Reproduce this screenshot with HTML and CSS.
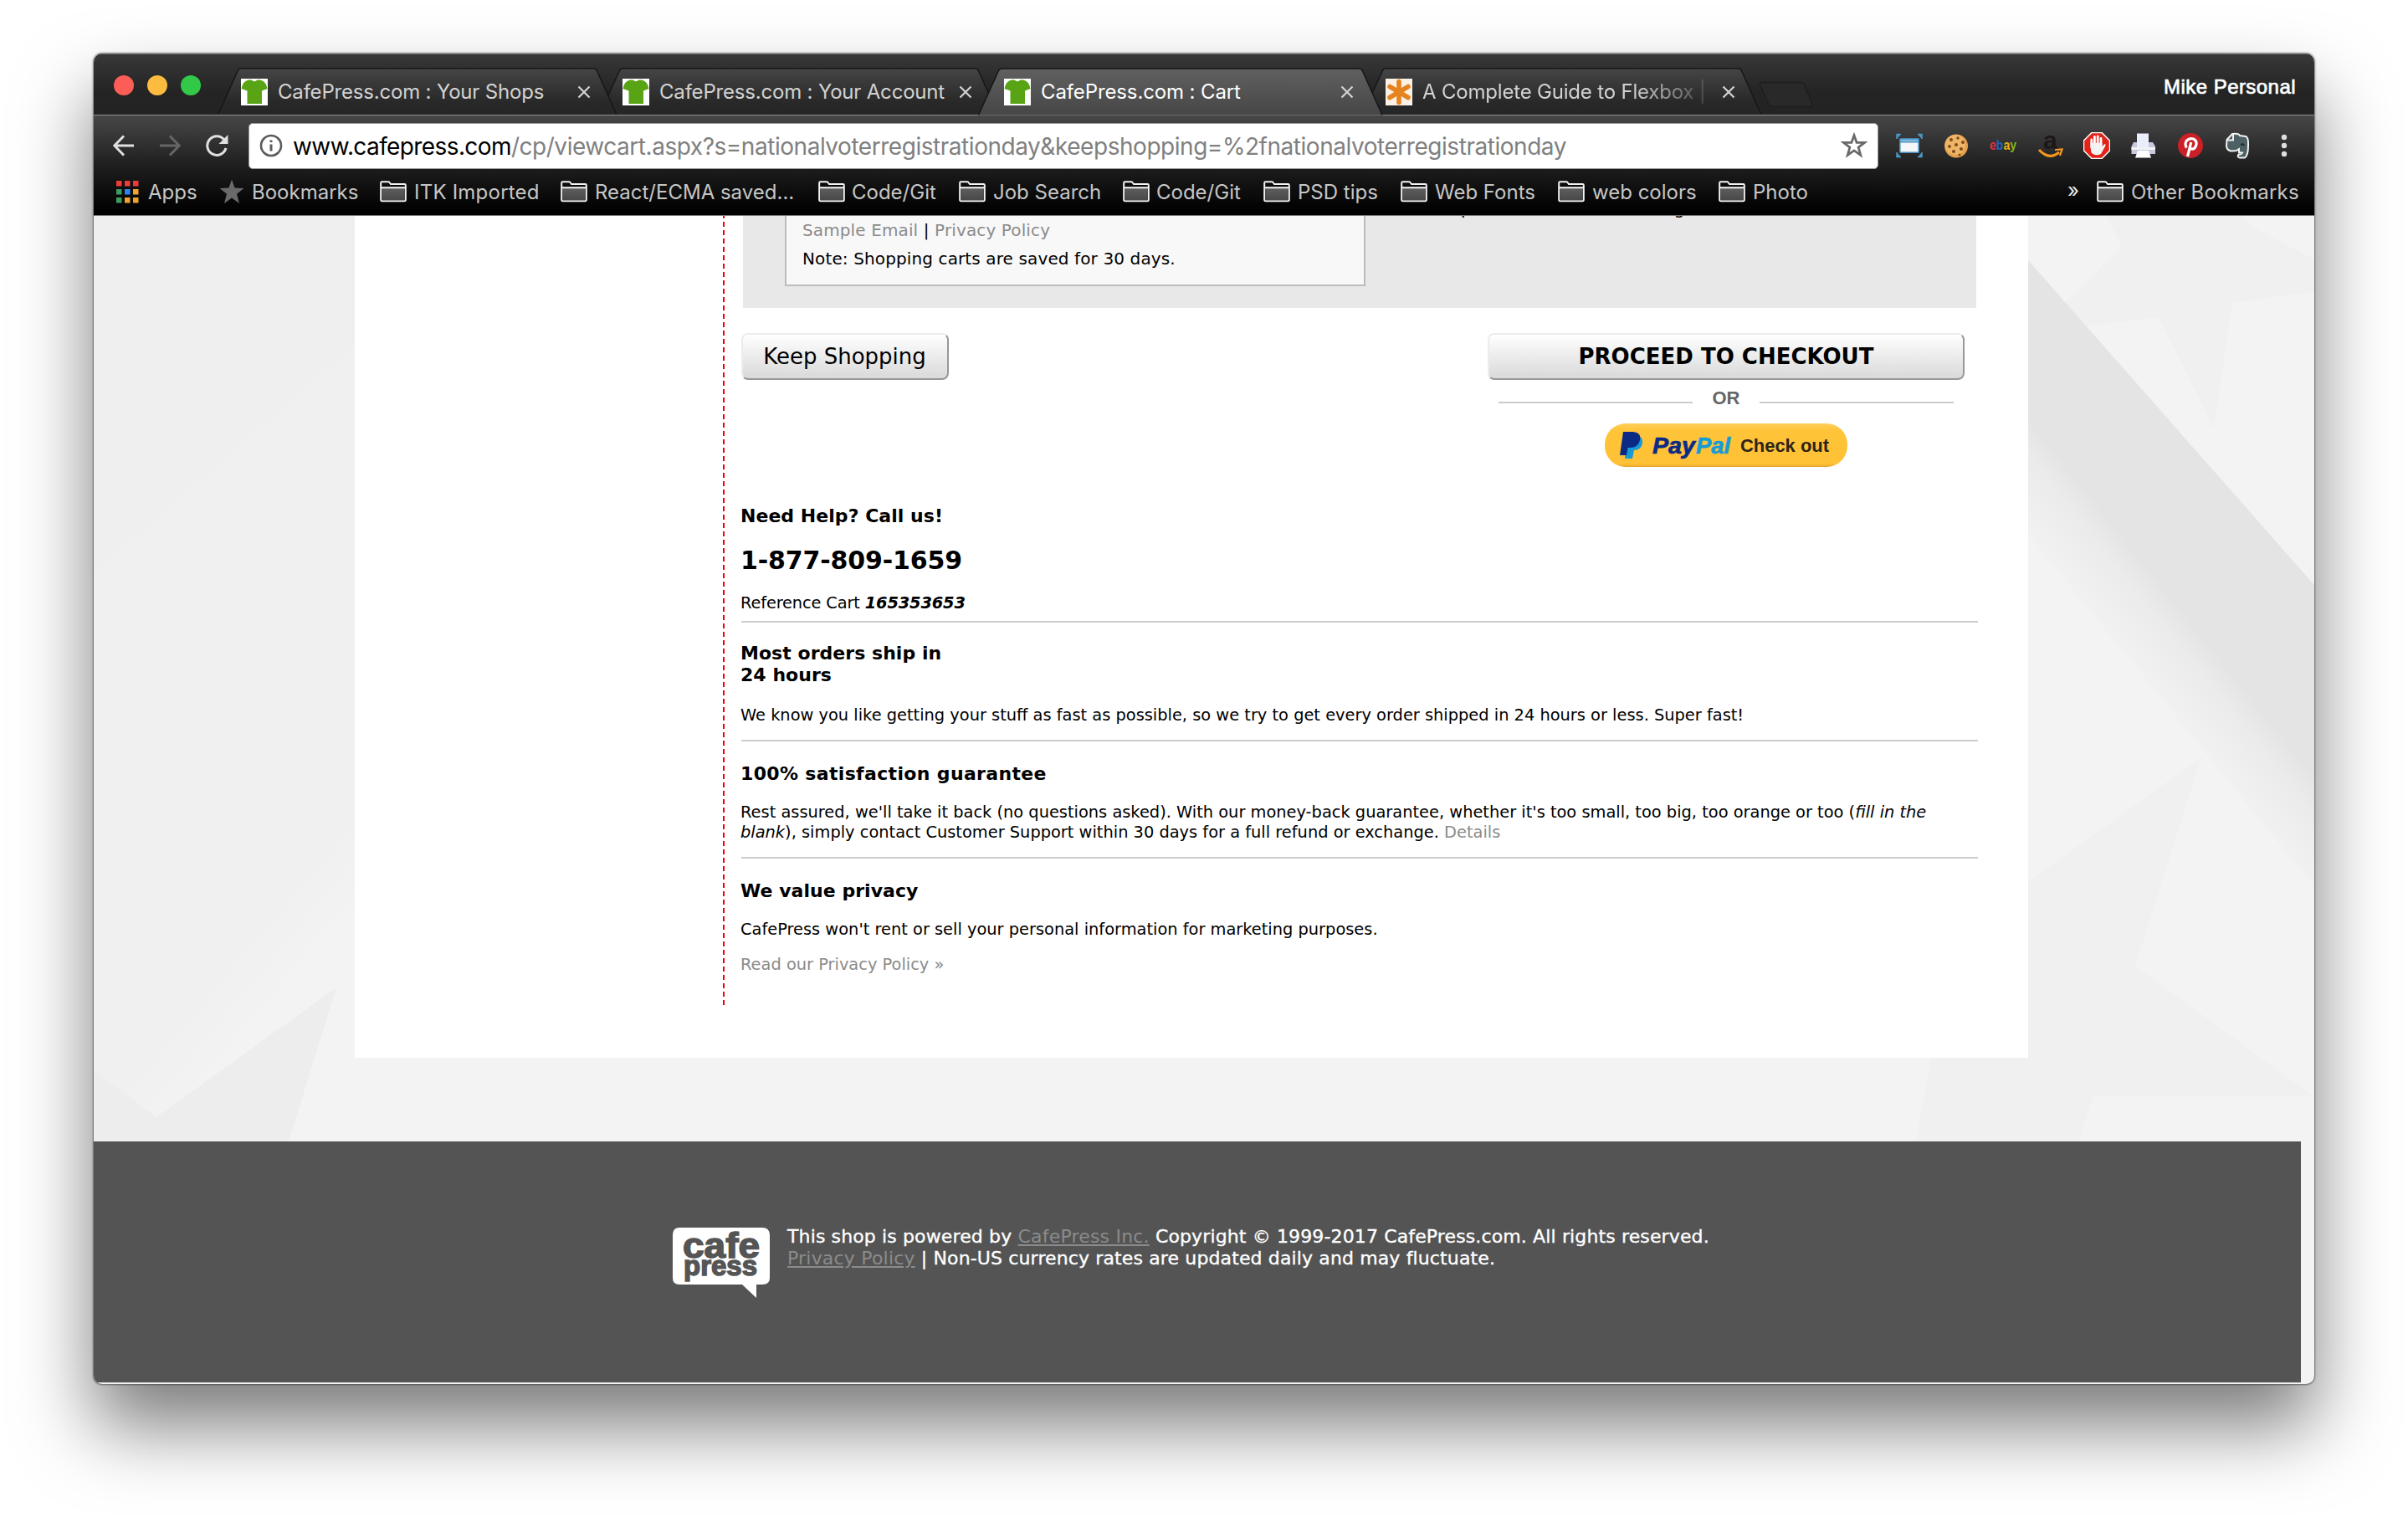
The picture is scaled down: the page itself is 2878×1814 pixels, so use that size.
FILE: index.html
```html
<!DOCTYPE html>
<html lang="en">
<head>
<meta charset="utf-8">
<title>CafePress.com : Cart</title>
<link rel="stylesheet" href="styles.css">
</head>
<body>
<svg class="defs" width="0" height="0" aria-hidden="true">
  <defs>
    <linearGradient id="tabFill" x1="0" y1="0" x2="0" y2="1"><stop offset="0" stop-color="#454545"/><stop offset=".75" stop-color="#282828"/><stop offset="1" stop-color="#262626"/></linearGradient>
    <linearGradient id="tabActive" x1="0" y1="0" x2="0" y2="1"><stop offset="0" stop-color="#606060"/><stop offset="1" stop-color="#464646"/></linearGradient>
    <linearGradient id="folderFill" x1="0" y1="0" x2="0" y2="1"><stop offset="0" stop-color="#5e5e5e"/><stop offset="1" stop-color="#484848"/></linearGradient>
    <symbol id="tab" viewBox="0 0 484 74"><path d="M0.5 73.5 L24.5 20.5 Q25.5 18 28.5 18 H455 Q458.500 18 459.500 21 L483 73.500" stroke="#161616" stroke-width="1.500"/></symbol>
    <symbol id="shirt" viewBox="0 0 32 32"><rect width="32" height="32" fill="#fff"/><path d="M9 1.500 L12.500 1.500 Q16 5 19.500 1.500 L23 1.500 Q30 3 31.500 12 L25 14.500 V30 H7.500 V14.500 L.5 12 Q2 3 9 1.500Z" fill="#59a414"/></symbol>
    <symbol id="folder" viewBox="0 0 32 26"><path d="M1.200 22.500 V2.500 Q1.200 1.200 2.500 1.200 H10 Q11 1.200 11.500 2 L13 4 H29.500 Q30.800 4 30.800 5.200 V22.500 Q30.800 24.300 29.500 24.300 H2.500 Q1.200 24.300 1.200 22.500Z" fill="#0c0c0c" stroke="#f4f4f4" stroke-width="2"/><path d="M2.200 9 H29.800 V23.300 H2.200Z" fill="url(#folderFill)"/><path d="M1.200 8.200 H30.800" stroke="#f4f4f4" stroke-width="2"/></symbol>
    <symbol id="close" viewBox="0 0 16 16"><path d="M1.500 1.500 L14.500 14.500 M14.500 1.500 L1.500 14.500" stroke="#d4d4d4" stroke-width="2.200"/></symbol>
  </defs>
</svg>

<div class="window">
  <header class="chrome">
    <div class="tabstrip">
      <div class="lights"><i class="red"></i><i class="amber"></i><i class="green"></i></div>
      <div class="tab first"><svg class="shape" fill="url(#tabFill)"><use href="#tab"/></svg><svg class="fav"><use href="#shirt"/></svg><span class="title">CafePress.com : Your Shops</span><svg class="x"><use href="#close"/></svg></div>
      <div class="tab"><svg class="shape" fill="url(#tabFill)"><use href="#tab"/></svg><svg class="fav"><use href="#shirt"/></svg><span class="title">CafePress.com : Your Account</span><svg class="x"><use href="#close"/></svg></div>
      <div class="tab active"><svg class="shape" fill="url(#tabActive)"><use href="#tab"/></svg><svg class="fav"><use href="#shirt"/></svg><span class="title">CafePress.com : Cart</span><svg class="x"><use href="#close"/></svg></div>
      <div class="tab"><svg class="shape" fill="url(#tabFill)"><use href="#tab"/></svg>
        <svg class="fav" viewBox="0 0 32 32"><rect width="32" height="32" fill="#fdf1e5"/><path d="M16 3.500 V28.500 M5 9.500 L27 22.500 M27 9.500 L5 22.500" stroke="#e5841f" stroke-width="5.600" stroke-linecap="round"/></svg>
        <span class="title fade">A Complete Guide to Flexbox |</span><svg class="x"><use href="#close"/></svg></div>
      <svg class="newtab" viewBox="0 0 66 32"><path d="M2 1.500 H50 Q53 1.500 54.500 4 L64 28 Q64.500 30.500 62 30.500 H17 Q13.500 30.500 12 28 L1.500 4 Q1 1.500 3 1.500Z" fill="#292929" stroke="#1d1d1d" stroke-width="1.300"/></svg>
      <div class="profile">Mike Personal</div>
    </div>

    <div class="toolbar">
      <svg class="nav" viewBox="0 0 26 26"><path d="M25 13 H2.500 M13 1.500 L1.800 13 L13 24.500" fill="none" stroke="#e0e0e0" stroke-width="3"/></svg>
      <svg class="nav fwd" viewBox="0 0 26 26"><path d="M1 13 H23.500 M13 1.500 L24.200 13 L13 24.500" fill="none" stroke="#666" stroke-width="3"/></svg>
      <svg class="nav reload" viewBox="0 0 28 28"><path d="M22.500 6.500 A11.300 11.300 0 1 0 25 17" fill="none" stroke="#e0e0e0" stroke-width="3"/><path d="M27.500 1 V12 H16.500Z" fill="#e0e0e0"/></svg>
      <div class="omnibox">
        <svg class="info" viewBox="0 0 28 28"><circle cx="14" cy="14" r="12" fill="none" stroke="#5c5c5c" stroke-width="2.600"/><path d="M14 12.500 V20.500 M14 7.500 V10" stroke="#5c5c5c" stroke-width="3"/></svg>
        <div class="url"><b>www.cafepress.com</b>/cp/viewcart.aspx?s=nationalvoterregistrationday&amp;keepshopping=%2fnationalvoterregistrationday</div>
        <svg class="star" viewBox="0 0 30 30"><path d="M15 3.500 L17.900 11.500 L26.800 11.600 L19.800 17 L22.300 25.600 L15 20.600 L7.700 25.600 L10.200 17 L3.200 11.600 L12.100 11.500Z" fill="none" stroke="#6a6a6a" stroke-width="2.600"/></svg>
      </div>
      <div class="extensions">
        <svg viewBox="0 0 32 32"><path d="M1 8 V2.500 H6 M26 2.500 H31 V8 M1 24 V29.500 H6 M26 29.500 H31 V24" fill="#4a95c4" stroke="#4a95c4" stroke-width="1.500"/><rect x="4" y="7" width="24" height="18" rx="1.500" fill="#3f86b5"/><rect x="5.500" y="8.500" width="21" height="3" fill="#7db9dd"/><rect x="5.500" y="12.500" width="21" height="11" fill="#f4f6f8"/></svg>
        <svg viewBox="0 0 32 32"><circle cx="16" cy="16.500" r="14" fill="#e3a14c"/><circle cx="15" cy="15" r="12" fill="#efb566"/><g fill="#7b4a1d"><circle cx="10" cy="9" r="2"/><circle cx="18" cy="7" r="1.700"/><circle cx="24" cy="12" r="2"/><circle cx="8" cy="17" r="1.900"/><circle cx="16" cy="15" r="2"/><circle cx="22" cy="20" r="2"/><circle cx="13" cy="23" r="2"/><circle cx="20" cy="27" r="1.500"/></g></svg>
        <svg viewBox="0 0 32 32"><text x="0" y="21" class="ebay" textLength="32" lengthAdjust="spacingAndGlyphs"><tspan fill="#e2323a">e</tspan><tspan fill="#1c66c8">b</tspan><tspan fill="#f0ae14">a</tspan><tspan fill="#86b817">y</tspan></text></svg>
        <svg viewBox="0 0 32 32"><text x="8" y="20" class="amz">a</text><path d="M3 21 Q15 34 27 24" fill="none" stroke="#f7981d" stroke-width="3"/><path d="M22 21 L30.500 20.500 L28 28" fill="none" stroke="#f7981d" stroke-width="2.200"/></svg>
        <svg viewBox="0 0 32 32"><path d="M10 .5 H22 L31.500 10 V22 L22 31.500 H10 L.5 22 V10Z" fill="#e2231a" stroke="#fff" stroke-width="1.500"/><path d="M9.800 18 V9 M13.400 15 V5.500 M17.200 15 V5 M21 16 V7.500" stroke="#fff" stroke-width="2.800" stroke-linecap="round"/><path d="M8.500 13 H22.500 V17 L25.500 14 Q27.500 14.500 26 17 L21 26 Q15 29 10 25 Q8.500 22 8.500 13Z" fill="#f3f3f3"/></svg>
        <svg viewBox="0 0 32 32"><path d="M8 18 V1.500 H22 V18Z" fill="#e8eefa"/><path d="M4 12 H8 V18 H22 V12 H27 L30 17 V26 H1.500 V17Z" fill="#c7c9dd"/><path d="M1.500 18 H30 V21 H1.500Z" fill="#f2f2f8"/><path d="M9 22 H22 L25 30.500 H6Z" fill="#fff"/></svg>
        <svg viewBox="0 0 32 32"><circle cx="16" cy="16" r="15" fill="#cb2027"/><path d="M11.500 18.500 Q8.500 14 11.500 10 Q15 6.500 19.500 8 Q24.500 10.500 22.500 16.500 Q20 21.500 16 19.500 M16.800 12 L12.500 29" fill="none" stroke="#fff" stroke-width="3.200"/></svg>
        <svg viewBox="0 0 32 32"><path d="M10 2 L3.500 9 L3 17 Q4 22 9 22.500 L15 22 L18 20 V24 L22 24.500 Q20.500 27 17.500 26.500 Q15.500 30 19 30.500 H25 Q29 28 29 16 Q29.500 6 26 5 L19 4 Q18 1 10 2Z" fill="#4d6063" stroke="#f2f2f2" stroke-width="2"/><path d="M11 2 V9.500 H4" fill="none" stroke="#f2f2f2" stroke-width="2"/><path d="M20.500 15.500 Q22.500 12.500 24 16" fill="none" stroke="#222" stroke-width="2"/></svg>
        <svg class="dots" viewBox="0 0 8 32"><circle cx="4" cy="6" r="3.200"/><circle cx="4" cy="16" r="3.200"/><circle cx="4" cy="26" r="3.200"/></svg>
      </div>
    </div>

    <nav class="bookmarks">
      <svg class="apps" viewBox="0 0 27 27"><path d="M0 0h6.500v6.500H0z M10 0h6.500v6.500H10z M20 0h6.500v6.500H20z" fill="#ef3c39"/><path d="M0 10h6.500v6.500H0z M0 20h6.500v6.500H0z" fill="#3c9b5f"/><path d="M10 10h6.500v6.500H10z" fill="#2d86ee"/><path d="M20 10h6.500v6.500H20z M10 20h6.500v6.500H10z M20 20h6.500v6.500H20z" fill="#f0a42c"/></svg><span>Apps</span>
      <svg class="bstar" viewBox="0 0 30 30"><path d="M15 0.500 L18.500 10.500 L29.500 11 L21 17.800 L24 29 L15 22.500 L6 29 L9 17.800 L.5 11 L11.500 10.500Z" fill="#6a6a6a"/></svg><span>Bookmarks</span>
      <svg class="folder"><use href="#folder"/></svg><span class="wide">ITK Imported</span>
      <svg class="folder"><use href="#folder"/></svg><span>React/ECMA saved…</span>
      <svg class="folder"><use href="#folder"/></svg><span>Code/Git</span>
      <svg class="folder"><use href="#folder"/></svg><span>Job Search</span>
      <svg class="folder"><use href="#folder"/></svg><span>Code/Git</span>
      <svg class="folder"><use href="#folder"/></svg><span>PSD tips</span>
      <svg class="folder"><use href="#folder"/></svg><span>Web Fonts</span>
      <svg class="folder"><use href="#folder"/></svg><span>web colors</span>
      <svg class="folder"><use href="#folder"/></svg><span>Photo</span>
      <span class="more">»</span>
      <svg class="folder"><use href="#folder"/></svg><span class="wide">Other Bookmarks</span>
    </nav>
  </header>

  <div class="viewport">
    <svg class="stars" viewBox="112 258 2654 1106" aria-hidden="true">
      <defs>
        <linearGradient id="bandFade" gradientUnits="userSpaceOnUse" x1="2595" y1="711" x2="2516" y2="774"><stop offset="0" stop-color="#e4e4e4"/><stop offset=".3" stop-color="#ebebeb"/><stop offset="1" stop-color="#f3f3f3"/></linearGradient>
        <linearGradient id="leftFade" gradientUnits="userSpaceOnUse" x1="270" y1="1150" x2="330" y2="1200"><stop offset="0" stop-color="#f0f0f0"/><stop offset="1" stop-color="#f3f3f3"/></linearGradient>
      </defs>
      <path d="M112 258 H424 V1364 H112Z" fill="url(#leftFade)"/>
      <path d="M112 258 H424 V412 L112 685Z" fill="#efefef"/>
      <path d="M112 1279 L187 1335 L402 1180 L345 1364 H112Z" fill="#ededed"/>
      <path d="M2518 258 L2536 295 L2470 360 L2425 397 L2580 379 L2646 513 L2668 362 L2766 348 V310 L2690 270 L2680 258Z" fill="#f0f0f0"/>
      <path d="M2424 500 L2766 928 V1060 L2424 640Z" fill="url(#bandFade)"/>
      <path d="M2424 311 L2766 699 V930 L2424 502Z" fill="#e4e4e4"/>
      <path d="M2424 1054 L2631 905 L2552 1154 L2763 1309 H2502 L2484 1364 H2290 L2320 1200 L2424 1200Z" fill="#f0f0f0"/>
    </svg>

    <main class="panel">
      <section class="content">
        <div class="savebar">
          <div class="savebox">
            <p><a>Sample Email</a> | <a>Privacy Policy</a></p>
            <p class="note">Note: Shopping carts are saved for 30 days.</p>
          </div>
          <p class="cutoff"><span>p</span><span>g</span></p>
        </div>

        <div class="actions">
          <button class="btn keep">Keep Shopping</button>
          <div class="checkout">
            <button class="btn proceed">PROCEED TO CHECKOUT</button>
            <div class="or">OR</div>
            <div class="paypal">
              <svg viewBox="0 0 290 52"><defs><linearGradient id="pp" x1="0" y1="0" x2="0" y2="1"><stop offset="0" stop-color="#ffce5c"/><stop offset=".15" stop-color="#ffc439"/><stop offset=".93" stop-color="#ffc136"/><stop offset="1" stop-color="#e3a52c"/></linearGradient></defs>
                <rect width="290" height="52" rx="25" fill="url(#pp)"/>
                <path d="M27 14 H38 Q46 16 45 24 Q43 32 35 32 L33 42 H24 Z" fill="#179bd7"/>
                <path d="M22 10 H34 Q44 11 42 20 Q40 29 30 29 H27.500 L26 38 H18Z" fill="#0b2a86"/>
                <g class="pptext"><text x="57" y="36" fill="#0b2a86" stroke="#0b2a86" textLength="51" lengthAdjust="spacingAndGlyphs">Pay</text><text x="109" y="36" fill="#179bd7" stroke="#179bd7" textLength="41" lengthAdjust="spacingAndGlyphs">Pal</text></g>
                <text x="162" y="34" class="ppcheck" textLength="106" lengthAdjust="spacingAndGlyphs">Check out</text></svg>
            </div>
          </div>
        </div>

        <div class="help">
          <h3>Need Help? Call us!</h3>
          <p class="phone">1-877-809-1659</p>
          <p class="ref">Reference Cart <b>165353653</b></p>
        </div>
        <div class="info-block ship">
          <h3>Most orders ship in<br>24 hours</h3>
          <p>We know you like getting your stuff as fast as possible, so we try to get every order shipped in 24 hours or less. Super fast!</p>
        </div>
        <div class="info-block">
          <h3 class="guarantee">100% satisfaction guarantee</h3>
          <p>Rest assured, we'll take it back (no questions asked). With our money-back guarantee, whether it's too small, too big, too orange or too (<i>fill in the<br>blank</i>), simply contact Customer Support within 30 days for a full refund or exchange. <a>Details</a></p>
        </div>
        <div class="info-block">
          <h3>We value privacy</h3>
          <p>CafePress won't rent or sell your personal information for marketing purposes.</p>
          <p class="link"><a>Read our Privacy Policy »</a></p>
        </div>
      </section>
    </main>

    <footer class="footer">
      <svg class="logo" viewBox="0 0 118 88"><path d="M9 2 H108 Q117 2 117 11 V62 Q117 70 108 70 H101 V86 L84 70 H9 Q1 70 1 62 V11 Q1 2 9 2Z" fill="#fff"/>
        <text x="13" y="38" class="l1" textLength="92" lengthAdjust="spacingAndGlyphs">cafe</text><text x="14" y="59" class="l2" textLength="88" lengthAdjust="spacingAndGlyphs">press</text></svg>
      <p>This shop is powered by <a>CafePress Inc.</a> Copyright © 1999-2017 CafePress.com. All rights reserved.<br><a>Privacy Policy</a> | Non-US currency rates are updated daily and may fluctuate.</p>
    </footer>
  </div>
</div>
</body>
</html>
```
FILE: styles.css
```css
* { box-sizing: border-box; }
body { margin: 0; padding: 64px 112px 0; width: 2878px; height: 1814px; overflow: hidden; background: #fff; color: #000; font-family: "DejaVu Sans", Verdana, sans-serif; }
p, h3 { margin: 0; }
svg { display: block; flex: none; }
.defs { position: absolute; }

.window { width: 2654px; height: 1590px; border-radius: 10px; background: #f3f3f3; box-shadow: 0 0 2px 1px rgba(0,0,0,.45), 0 50px 90px rgba(0,0,0,.52); overflow: hidden; }

/* browser chrome */
.chrome { height: 194px; font-family: Inter, sans-serif; background: linear-gradient(#383838, #242424 46px, #232323 74px, #474747 74px, #1c1c1c 138px, #050505 180px, #000); border-bottom: 1px solid #777; }
.tabstrip { display: flex; height: 74px; box-shadow: inset 0 1px #6a6a6a, inset 0 -1px #919191; }
.lights { display: flex; gap: 16px; width: 144.500px; padding: 26px 0 0 24px; }
.lights i { width: 24px; height: 24px; border-radius: 50%; }
.red { background: #fd5d57; } .amber { background: #fdbb3f; } .green { background: #32c949; }
.tab { position: relative; display: flex; width: 456px; height: 74px; padding: 30px 0 0 31.500px; color: #d2d2d2; font-size: 24px; letter-spacing: -.19px; line-height: 32px; z-index: 1; }
.tab.first { z-index: 2; }
.tab.active { z-index: 3; color: #fff; letter-spacing: -.12px; }
.tab .shape { position: absolute; left: 0; top: 0; width: 484px; height: 74px; z-index: -1; }
.tab:not(.active) .shape { height: 73px; }
.fav { width: 32px; height: 32px; margin-right: 12px; }
.title { width: 350px; white-space: nowrap; }
.title.fade { width: 340px; margin-right: 10px; -webkit-mask-image: linear-gradient(90deg, #000 250px, rgba(0,0,0,.2) 335px); mask-image: linear-gradient(90deg, #000 250px, rgba(0,0,0,.2) 335px); }
.x { width: 16px; height: 16px; margin: 8px 0 0 8px; }
.newtab { width: 66px; height: 32px; margin: 33px 0 0 21px; }
.profile { margin: 26px 22px 0 auto; font: 24px/28px "Liberation Sans", sans-serif; letter-spacing: .45px; color: #fff; -webkit-text-stroke: .7px #fff; }

.toolbar { display: flex; height: 64px; padding: 0 20px 0 23px; }
.nav { width: 26px; height: 26px; margin-top: 22.500px; }
.nav.fwd { margin-left: 29px; }
.nav.reload { width: 28px; height: 28px; margin: 22px 0 0 29px; }
.omnibox { display: flex; flex: none; width: 1948px; height: 55px; margin: 9px 0 0 24px; padding: 13px 10px 0 12px; border: 1px solid #999; border-radius: 5px; background: #fff; }
.info { width: 28px; height: 28px; margin-top: -1px; }
.url { width: 1842px; margin: -5px 0 0 12px; font-size: 28px; letter-spacing: -.46px; line-height: 38px; color: #808080; white-space: nowrap; }
.url b { font-weight: 400; color: #000; letter-spacing: -.6px; }
.star { width: 32px; height: 32px; margin: -3px 0 0 8px; }
.extensions { display: flex; gap: 24px; margin: 20px 0 0 21px; }
.extensions svg { width: 32px; height: 32px; }
.dots { fill: #dedede; }
.extensions .dots { width: 8px; margin-left: 12px; }
.ebay { font: bold 17px "Liberation Sans", sans-serif; }
.amz { font: bold 30px "Liberation Sans", sans-serif; fill: #1c1718; }

.bookmarks { display: grid; height: 55px; padding: 11px 0 0 27px; align-items: start; grid-template-columns: 38px 85px 39px 153px 41px 175px 41px 267px 40px 128px 41px 155px 40px 128px 41px 123px 41px 147px 41px 151px 41px 377px 34px 41px 220px; font-size: 24px; line-height: 34px; color: #c6c6c6; white-space: nowrap; }
.wide { letter-spacing: .22px; }
.apps { width: 27px; height: 27px; margin-top: 3px; }
.bstar { width: 30px; height: 30px; margin-top: 1px; }
.folder { width: 32px; height: 26px; margin-top: 3px; }
.more { color: #eee; margin: -2px 0 0 -1px; }

/* page */
.viewport { position: relative; height: 1396px; }
.stars { position: absolute; left: 0; top: 0; width: 2654px; height: 1106px; }
.panel { position: relative; width: 2000px; height: 1006px; margin-left: 312px; padding-left: 440px; background: #fff; }
.content { height: 946px; padding-left: 22px; background: repeating-linear-gradient(#f0000f 0 3px, #fff 3px 7px, #f0000f 7px 10px) 0 0 / 2px 100% no-repeat; }
a { color: #8b8b8b; }

.savebar { display: flex; width: 1474px; height: 110px; margin-left: 2px; padding-left: 50px; background: #e8e8e8; overflow: hidden; }
.savebox { width: 694px; height: 84px; padding: 5px 0 0 19px; border: solid #bcbcbc; border-width: 0 2px 2px; background: #f8f8f8; font-size: 20px; line-height: 24px; letter-spacing: .12px; }
.note { margin-top: 10px; }
.cutoff { display: flex; gap: 242px; margin: -21px 0 0 114px; font-size: 20px; line-height: 24px; }

.actions { display: flex; justify-content: space-between; width: 1462px; margin-top: 30px; }
.btn { display: block; height: 56px; padding: 1px 0 0; border: 2px solid; border-color: #ececec #989898 #989898 #ececec; border-radius: 8px; background: linear-gradient(#fff, #d9d9d9); font: 26px/51px "DejaVu Sans", Verdana, sans-serif; color: #000; text-align: center; }
.keep { width: 248px; padding-right: 1px; }
.checkout { width: 570px; }
.proceed { width: 570px; font-weight: 700; }
.or { display: flex; justify-content: center; width: 544px; height: 28px; margin: 8px 0 0 13px; font: bold 22px/28px "Liberation Sans", sans-serif; color: #666; background: linear-gradient(#ccc, #ccc) 0 18px / 232px 2px no-repeat, linear-gradient(#ccc, #ccc) 100% 18px / 232px 2px no-repeat; }
.paypal { width: 290px; height: 52px; margin: 16px auto 0; }
.paypal svg { width: 290px; height: 52px; }
.pptext { font: italic bold 28px "Liberation Sans", sans-serif; stroke-width: .7px; }
.ppcheck { font: bold 22px "Liberation Sans", sans-serif; fill: #2c2416; }

.help { width: 1478px; height: 186px; padding-top: 45px; border-bottom: 2px solid #ccc; }
.help h3, .help p, .info-block h3, .info-block p { margin-left: -1px; }
h3 { font-size: 22px; line-height: 26px; letter-spacing: .04px; }
.guarantee { letter-spacing: .34px; }
.help h3 { line-height: 28px; }
.phone { margin-top: 21px; font-size: 30px; line-height: 36px; font-weight: 700; letter-spacing: -.14px; }
.ref { margin-top: 21px; font-size: 19.400px; line-height: 24px; letter-spacing: -.15px; }
.ref b { font-style: italic; }
.info-block { width: 1478px; height: 140px; padding-top: 26px; border-bottom: 2px solid #ccc; font-size: 19.400px; line-height: 24px; white-space: nowrap; }
.info-block.ship { height: 142px; padding-top: 24px; }
.info-block:last-child { border: 0; }
.info-block p { margin-top: 21px; }
.info-block.ship p { margin-top: 23px; }
.info-block .link { margin-top: 18px; }

.footer { position: relative; display: flex; width: 2638px; height: 288px; margin-top: 100px; padding: 101px 0 0 691px; background: #545454; color: #fff; font-size: 22px; line-height: 26px; letter-spacing: .13px; white-space: nowrap; -webkit-text-stroke: .35px; }
.footer p { margin-left: 20px; }
.footer a { color: #8b8b8b; text-decoration: underline; -webkit-text-stroke: 0; letter-spacing: .2px; }
.logo { width: 118px; height: 88px; letter-spacing: 0; }
.l1 { font: bold 42px "Liberation Sans", sans-serif; fill: #555; stroke: #555; stroke-width: 1.500px; }
.l2 { font: bold 33px "Liberation Sans", sans-serif; fill: #555; stroke: #555; stroke-width: 1.500px; }
```
